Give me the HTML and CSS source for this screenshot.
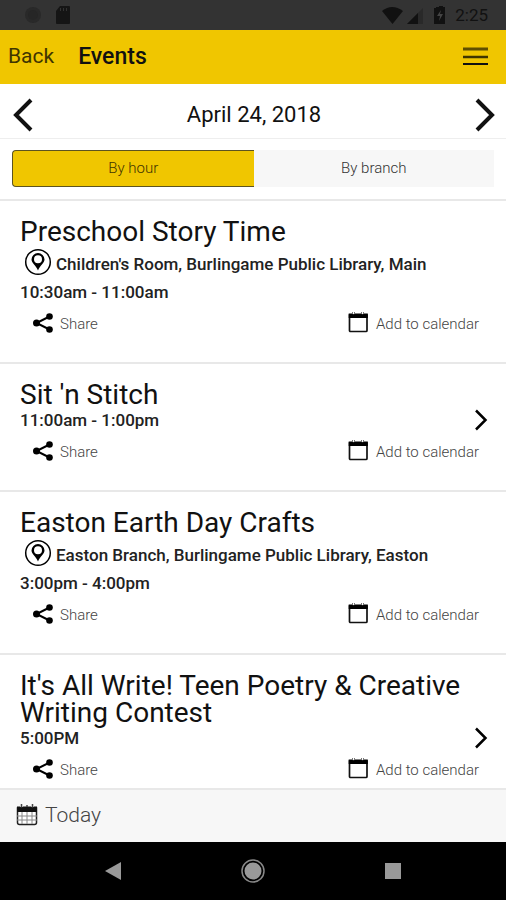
FILE: index.html
```html
<!DOCTYPE html>
<html lang="en">
<head>
<meta charset="utf-8">
<meta name="viewport" content="width=device-width, initial-scale=1">
<title>Events</title>
<link rel="stylesheet" href="styles.css">
</head>
<body>
<svg class="defs" aria-hidden="true">
  <symbol id="share" viewBox="0 0 20 20"><path d="M16.500 3.500 3.500 10 16.500 16.500" fill="none" stroke="#000" stroke-width="2"/><circle cx="16.500" cy="3.500" r="3.300"/><circle cx="3.500" cy="10" r="3.500"/><circle cx="16.500" cy="16.500" r="3.300"/></symbol>
  <symbol id="calendar" viewBox="0 0 21 21"><path d="M1.500 3h17.500v15.500q0 1-1 1H2.500q-1 0-1-1z" fill="#fff" stroke="#111" stroke-width="1.700"/><path d="M.7 1.500h3.300q1.500 2 3 0h6q1.500 2 3 0h3.800V6H.7z"/><path d="M4.500 0v2M6.500 0v2M13.500 0v2M15.500 0v2" stroke="#777" fill="none"/></symbol>
  <symbol id="pin" viewBox="0 0 28 28"><circle cx="14" cy="14" r="12.300" fill="none" stroke="#000" stroke-width="1.500"/><path fill-rule="evenodd" d="M14 5a6.500 6.500 0 0 0-6.500 6.500c0 3.500 4.700 6 6.500 11 1.800-5 6.500-7.500 6.500-11A6.500 6.500 0 0 0 14 5zm0 2.300a4 4 0 1 1 0 8 4 4 0 0 1 0-8z"/></symbol>
  <symbol id="chevron" viewBox="0 0 14 22"><path d="M2 1.500 11.500 11 2 20.500" fill="none" stroke="#000" stroke-width="2.500"/></symbol>
</svg>

<div class="status">
  <svg width="48" height="20" viewBox="0 0 48 20" aria-hidden="true"><circle cx="9" cy="10" r="8" fill="#292929"/><circle cx="9" cy="10" r="5" fill="#262626"/><path d="M36 1h9q1 0 1 1v16q0 1-1 1H33q-1 0-1-1V6z" fill="#151515"/><path d="M36.500 3v3M39.500 3v3M42.500 3v3" stroke="#333"/></svg>
  <div class="status-right">
    <svg width="66" height="20" viewBox="0 0 66 20" aria-hidden="true"><path d="M1 6q10-8 21 0L11.500 19z" fill="#111"/><path d="M42 3v16H26z" fill="#292929"/><path d="M37 8v11H26z" fill="#111"/><path d="M55 2h3V1h4v1h2v17H53V3h2z" fill="#111"/><path d="M60 5l-4 6h3l-1 5 4-7h-3z" fill="#444"/></svg>
    <span>2:25</span>
  </div>
</div>

<header class="topbar">
  <a class="back" href="#">Back</a>
  <h1>Events</h1>
  <button class="menu" aria-label="Menu"><svg width="26" height="20" viewBox="0 0 26 20"><path d="M0 3h25" stroke="#5f4f00" stroke-width="3"/><path d="M0 11h25" stroke="#3f3500" stroke-width="2.500"/><path d="M0 18h25" stroke="#111" stroke-width="2"/></svg></button>
</header>

<div class="datebar">
  <button aria-label="Previous day"><svg width="22" height="36" viewBox="0 0 22 36"><path d="M19 3 4 18 19 33" fill="none" stroke="#111" stroke-width="4"/></svg></button>
  <h2>April 24, 2018</h2>
  <button aria-label="Next day"><svg width="22" height="36" viewBox="0 0 22 36"><path d="M3 3 18 18 3 33" fill="none" stroke="#111" stroke-width="4"/></svg></button>
</div>

<div class="segments">
  <button class="on" aria-pressed="true">By hour</button>
  <button aria-pressed="false">By branch</button>
</div>

<main class="list">
  <article class="event">
    <h3>Preschool Story Time</h3>
    <p class="place"><svg width="28" height="28"><use href="#pin"/></svg><span>Children's Room, Burlingame Public Library, Main</span></p>
    <p class="time">10:30am - 11:00am</p>
    <div class="actions">
      <button><svg width="20" height="20"><use href="#share"/></svg>Share</button>
      <button><svg width="21" height="21"><use href="#calendar"/></svg>Add to calendar</button>
    </div>
  </article>
  <article class="event">
    <h3>Sit 'n Stitch</h3>
    <p class="time">11:00am - 1:00pm<a href="#" aria-label="Details"><svg width="14" height="22"><use href="#chevron"/></svg></a></p>
    <div class="actions">
      <button><svg width="20" height="20"><use href="#share"/></svg>Share</button>
      <button><svg width="21" height="21"><use href="#calendar"/></svg>Add to calendar</button>
    </div>
  </article>
  <article class="event">
    <h3>Easton Earth Day Crafts</h3>
    <p class="place"><svg width="28" height="28"><use href="#pin"/></svg><span>Easton Branch, Burlingame Public Library, Easton</span></p>
    <p class="time">3:00pm - 4:00pm</p>
    <div class="actions">
      <button><svg width="20" height="20"><use href="#share"/></svg>Share</button>
      <button><svg width="21" height="21"><use href="#calendar"/></svg>Add to calendar</button>
    </div>
  </article>
  <article class="event">
    <h3>It's All Write! Teen Poetry &amp; Creative Writing Contest</h3>
    <p class="time">5:00PM<a href="#" aria-label="Details"><svg width="14" height="22"><use href="#chevron"/></svg></a></p>
    <div class="actions">
      <button><svg width="20" height="20"><use href="#share"/></svg>Share</button>
      <button><svg width="21" height="21"><use href="#calendar"/></svg>Add to calendar</button>
    </div>
  </article>
</main>

<footer class="today">
  <button><svg width="22" height="22" viewBox="0 0 22 22"><path d="M1.500 4h19v14.500q0 2-2 2h-15q-2 0-2-2z" fill="#fff" stroke="#222" stroke-width="1.500"/><path d="M1 2.500h3q1.500 2 3 0h8q1.500 2 3 0h3V8H1z" fill="#111"/><path d="M5.500 0v3M16.500 0v3M11 1v2" stroke="#444" stroke-width="1.500"/><path d="M1 12h20M1 16h20M6 8v12M11 8v12M16 8v12" stroke="#888"/></svg>Today</button>
</footer>

<nav class="system">
  <button aria-label="Back"><svg width="24" height="24" viewBox="0 0 24 24"><path d="M4 12 20 3v18z" fill="#999"/></svg></button>
  <button aria-label="Home"><svg width="24" height="24" viewBox="0 0 24 24"><circle cx="12" cy="12" r="11" fill="none" stroke="#888" stroke-width="1.500"/><circle cx="12" cy="12" r="8.500" fill="#999"/></svg></button>
  <button aria-label="Recent apps"><svg width="24" height="24" viewBox="0 0 24 24"><path d="M4 4h16v16H4z" fill="#999"/></svg></button>
</nav>
</body>
</html>
```
FILE: styles.css
```css
* {
  box-sizing: border-box;
}

body {
  margin: 0;
  height: 100vh;
  display: flex;
  flex-direction: column;
  background: #fff;
  color: #111;
  font-family: Roboto, "Liberation Sans", sans-serif;
}

h1, h2, h3, p {
  margin: 0;
  font-weight: 400;
}

button {
  padding: 0;
  border: 0;
  background: none;
  color: inherit;
  font: inherit;
}

a {
  color: inherit;
  text-decoration: none;
}

svg {
  display: block;
  flex: none;
}

.defs {
  position: absolute;
  width: 0;
  height: 0;
}

.status {
  flex: none;
  height: 30px;
  padding: 0 18px 0 24px;
  display: flex;
  align-items: center;
  justify-content: space-between;
  background: #333;
  color: #111;
  font-size: 17px;
}

.status-right {
  display: flex;
  align-items: center;
  gap: 8px;
}

.topbar {
  flex: none;
  height: 54px;
  padding: 0 17px 2px 8px;
  display: flex;
  align-items: center;
  gap: 24px;
  background: #f0c600;
  font-size: 21px;
}

.back {
  color: #3f3500;
}

.topbar h1 {
  font-size: 23px;
  font-weight: 500;
}

.menu {
  margin-left: auto;
}

.datebar {
  flex: none;
  height: 55px;
  padding: 7px 10px 0 12px;
  display: flex;
  align-items: center;
  justify-content: space-between;
  border-bottom: 1px solid #eee;
}

.datebar h2 {
  font-size: 22px;
}

.segments {
  flex: none;
  display: flex;
  padding: 11px 12px 12px;
  border-bottom: 2px solid #e8e8e8;
}

.segments button {
  flex: 1;
  height: 37px;
  padding-bottom: 2px;
  background: #f7f7f7;
  color: #333;
  font-size: 15px;
  font-weight: 300;
}

.segments .on {
  border: 1px solid #5d5420;
  border-right: 0;
  border-radius: 4px 0 0 4px;
  background: #f0c600;
  color: #3f3500;
}

.list {
  flex: 1;
  min-height: 0;
  overflow: hidden;
}

.event {
  padding: 17px 18px 17px 20px;
  border-bottom: 2px solid #e8e8e8;
}

.event h3 {
  padding-bottom: 1px;
  font-size: 28px;
  line-height: 27px;
}

.place {
  display: flex;
  align-items: center;
  gap: 4px;
  height: 35px;
  padding-left: 4px;
  font-size: 17px;
  font-weight: 500;
  color: #222;
}

.place svg {
  margin-bottom: 3px;
}

.time {
  display: flex;
  align-items: center;
  justify-content: space-between;
  height: 22px;
  font-size: 17px;
  font-weight: 500;
  color: #222;
}

.actions {
  display: flex;
  align-items: center;
  justify-content: space-between;
  height: 42px;
  padding: 0 9px 0 13px;
}

.actions button {
  display: flex;
  align-items: center;
  gap: 7px;
  color: #444;
  font-size: 15px;
  font-weight: 300;
}

.actions svg {
  margin-bottom: 3px;
}

.today {
  flex: none;
  height: 54px;
  padding: 0 16px 3px;
  display: flex;
  align-items: center;
  border-top: 2px solid #e8e8e8;
  background: #f7f7f7;
}

.today button {
  display: flex;
  align-items: center;
  gap: 7px;
  color: #444;
  font-size: 21px;
  font-weight: 300;
}

.system {
  flex: none;
  height: 58px;
  padding: 0 43px;
  display: flex;
  align-items: center;
  background: #000;
}

.system button {
  flex: 1;
  display: flex;
  justify-content: center;
}
```
